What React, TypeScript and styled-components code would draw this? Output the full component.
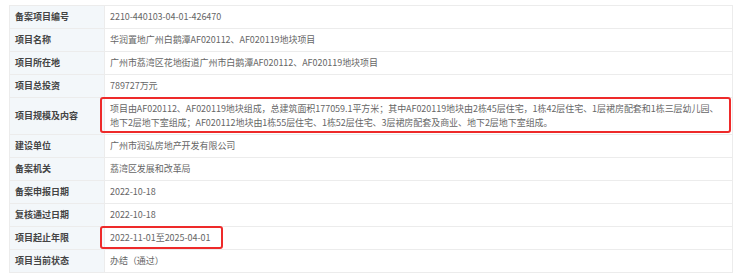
import styled, { createGlobalStyle } from 'styled-components'

const GlobalStyle = createGlobalStyle`
  html, body {
    margin: 0;
    padding: 0;
    background: #ffffff;
  }
  body {
    font-family: "Noto Sans CJK SC", "Noto Sans", sans-serif;
  }
`

type Row = {
  label: string
  value: string
  mark?: 'wide' | 'short'
}

const rows: Row[] = [
  { label: '备案项目编号', value: '2210-440103-04-01-426470' },
  { label: '项目名称', value: '华润置地广州白鹅潭AF020112、AF020119地块项目' },
  {
    label: '项目所在地',
    value: '广州市荔湾区花地街道广州市白鹅潭AF020112、AF020119地块项目',
  },
  { label: '项目总投资', value: '789727万元' },
  {
    label: '项目规模及内容',
    value:
      '项目由AF020112、AF020119地块组成，总建筑面积177059.1平方米；其中AF020119地块由2栋45层住宅，1栋42层住宅、1层裙房配套和1栋三层幼儿园、\n地下2层地下室组成；AF020112地块由1栋55层住宅、1栋52层住宅、3层裙房配套及商业、地下2层地下室组成。',
    mark: 'wide',
  },
  { label: '建设单位', value: '广州市润弘房地产开发有限公司' },
  { label: '备案机关', value: '荔湾区发展和改革局' },
  { label: '备案申报日期', value: '2022-10-18' },
  { label: '复核通过日期', value: '2022-10-18' },
  { label: '项目起止年限', value: '2022-11-01至2025-04-01', mark: 'short' },
  { label: '项目当前状态', value: '办结（通过）' },
]

export default function App() {
  return (
    <>
      <GlobalStyle />
      <Wrapper>
        <Table>
          <tbody>
            {rows.map((row) => (
              <tr key={row.label}>
                <Label>{row.label}</Label>
                <Value>
                  {row.value}
                  {row.mark && <Mark $kind={row.mark} />}
                </Value>
              </tr>
            ))}
          </tbody>
        </Table>
      </Wrapper>
    </>
  )
}

const Wrapper = styled.div`
  padding: 5px 0 0 9px;
`

const Table = styled.table`
  width: 724px;
  border-collapse: collapse;
  table-layout: fixed;
  font-size: 9px;
  line-height: 14px;
  border: 1px solid #ececec;
`

const Label = styled.td`
  width: 84px;
  padding: 4px 5px;
  background: #f3f7fa;
  color: #444;
  font-weight: bold;
  border-top: 1px solid #ececec;
  border-right: 1px solid #ececec;
  vertical-align: middle;
`

const Value = styled.td`
  position: relative;
  padding: 4px 1px 4px 5px;
  color: #666;
  letter-spacing: -0.05px;
  white-space: pre-line;
  border-top: 1px solid #ececec;
  vertical-align: middle;
`

const Mark = styled.span<{ $kind: 'wide' | 'short' }>`
  position: absolute;
  top: -1px;
  left: -5px;
  right: ${(p) => (p.$kind === 'wide' ? '1px' : 'auto')};
  width: ${(p) => (p.$kind === 'wide' ? 'auto' : '123px')};
  bottom: ${(p) => (p.$kind === 'wide' ? '1px' : '0px')};
  box-sizing: border-box;
  border: 2px solid #ee2a2a;
  border-radius: 3px;
  pointer-events: none;
`
